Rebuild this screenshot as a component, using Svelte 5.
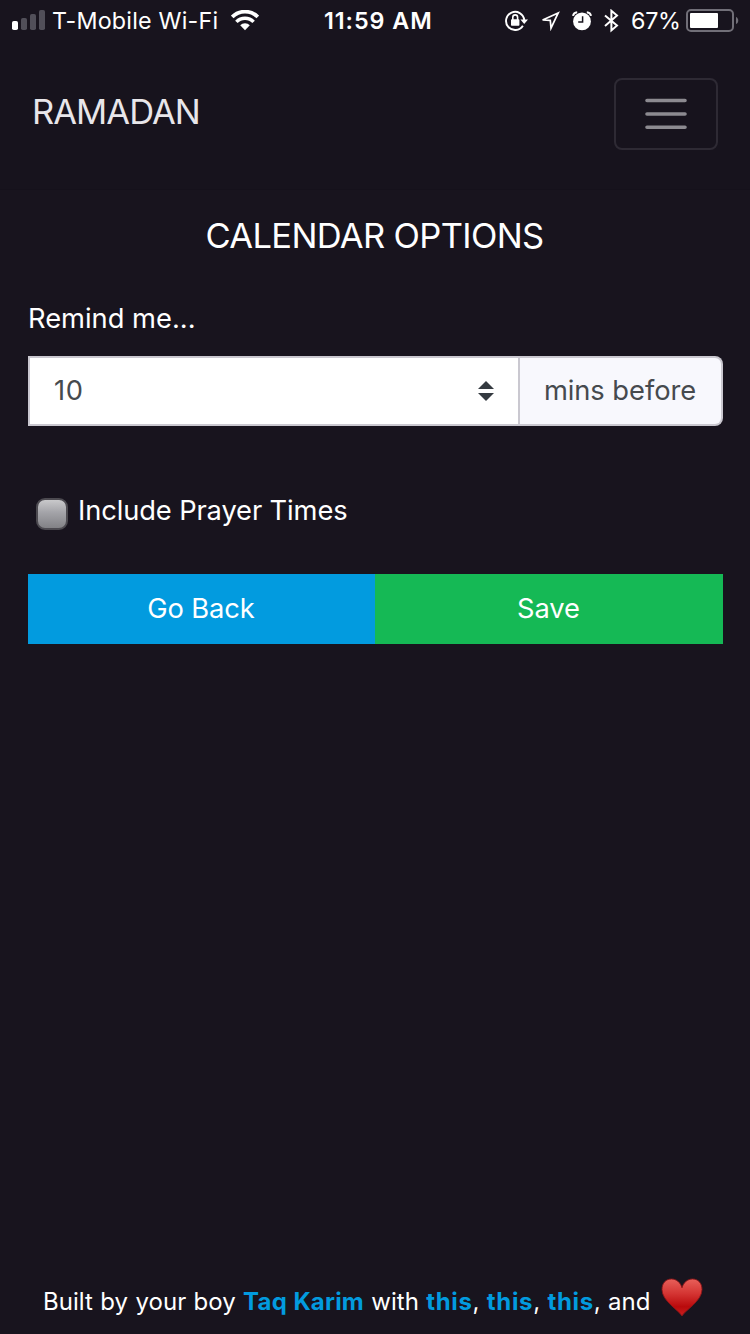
<script>
  const links = ['this', 'this', 'this'];
  let included = $state(false);
</script>

<div class="screen">
  <div class="status">
    <div class="carrier">
      <svg class="signal" width="34" height="20" viewBox="0 0 34 20">
        <rect x="0" y="11" width="6" height="9" rx="1.8" fill="#fff" />
        <rect x="9" y="8" width="6" height="12" rx="1.8" fill="#514f59" />
        <rect x="18" y="4" width="6" height="16" rx="1.8" fill="#514f59" />
        <rect x="27" y="0" width="6" height="20" rx="1.8" fill="#514f59" />
      </svg>
      <span class="network">T-Mobile Wi-Fi</span>
      <svg class="wifi" width="28" height="21" viewBox="0 0 28 21">
        <path d="M1.2 7A18 18 0 0 1 26.8 7" fill="none" stroke="#fff" stroke-width="3.8" />
        <path d="M5.4 11.9A12 12 0 0 1 22.6 11.9" fill="none" stroke="#fff" stroke-width="3.5" />
        <path d="M9.2 15.2A6.7 6.7 0 0 1 18.8 15.2L14 20.2Z" fill="#fff" />
      </svg>
    </div>
    <div class="time">11:59 AM</div>
    <div class="indicators">
      <svg class="lock" width="24" height="22" viewBox="0 0 24 22">
        <path d="M17.9 15.7A9.1 9.1 0 1 1 19.2 10" fill="none" stroke="#fff" stroke-width="1.9" />
        <path d="M15.4 9.4H23L19.2 13.9Z" fill="#fff" />
        <rect x="6" y="9.2" width="8.4" height="6.5" rx="0.8" fill="#fff" />
        <path d="M7.8 10V7.3a2.4 2.4 0 0 1 4.8 0V10" fill="none" stroke="#fff" stroke-width="1.6" />
      </svg>
      <svg class="arrow" width="20" height="20" viewBox="0 0 20 20">
        <path d="M2.6 9L18.2 1.9L11 17.2L10.3 9.3Z" fill="none" stroke="#fff" stroke-width="1.7" />
      </svg>
      <svg class="alarm" width="20" height="20" viewBox="0 0 20 20">
        <circle cx="10" cy="10.4" r="8.9" fill="#fff" />
        <path d="M10.6 5.2V11.1H6.2" fill="none" stroke="#18141e" stroke-width="1.5" />
        <path d="M1 4.9Q1.6 1.5 5.2 1.2M14.8 1.2Q18.4 1.5 19 4.9" fill="none" stroke="#fff" stroke-width="2" />
      </svg>
      <svg class="bluetooth" width="15" height="24" viewBox="0 0 15 24">
        <path d="M1 6.4L13 16.6L7.4 21.4V1.8L13 6.6L1 17" fill="none" stroke="#fff" stroke-width="2" />
      </svg>
      <span class="percent">67%</span>
      <svg class="battery" width="53" height="24" viewBox="0 0 53 24">
        <rect x="1" y="1" width="46" height="21" rx="4" fill="none" stroke="#716f78" stroke-width="2" />
        <rect x="4" y="4" width="28" height="15" rx="1" fill="#fff" />
        <path d="M50 8C53 9 53 14 50 15Z" fill="#716f78" />
      </svg>
    </div>
  </div>

  <nav>
    <span class="brand">RAMADAN</span>
    <button class="toggler" aria-label="Menu">
      <svg width="42" height="32" viewBox="0 0 42 32">
        <path d="M2 2.5H40M2 16H40M2 29.2H40" stroke="#8c8a90" stroke-width="3.6" stroke-linecap="round" />
      </svg>
    </button>
  </nav>

  <main>
    <h1>CALENDAR OPTIONS</h1>
    <div class="remind">Remind me...</div>
    <div class="group">
      <div class="select">
        <span class="value">10</span>
        <svg width="16" height="20" viewBox="0 0 16 20">
          <path d="M0 8L8 0L16 8ZM0 12H16L8 20Z" fill="#343a40" />
        </svg>
      </div>
      <div class="addon"><span>mins before</span></div>
    </div>
    <div class="check">
      <button class="box" role="checkbox" aria-checked={included} aria-label="Include Prayer Times" onclick={() => (included = !included)}></button>
      <span class="label">Include Prayer Times</span>
    </div>
    <div class="actions">
      <button class="back"><span>Go Back</span></button>
      <button class="save"><span>Save</span></button>
    </div>
  </main>

  <footer>
    <span class="credit">Built by your boy <b class="author">Taq Karim</b> with {#each links as link}<b>{link}</b>,{' '}{/each}and</span>
    <svg class="heart" width="42" height="40" viewBox="0 0 42 40">
      <defs>
        <linearGradient id="red" x1="0" y1="0" x2="0" y2="1">
          <stop offset="0" stop-color="#e8605a" />
          <stop offset="0.4" stop-color="#d43432" />
          <stop offset="0.75" stop-color="#b90a0c" />
          <stop offset="1" stop-color="#c82020" />
        </linearGradient>
      </defs>
      <path d="M21 38C17.500 32 1 23 1 11.500C1 5 5 1 10.500 1C15.500 1 19.500 4.500 21 9.800C22.500 4.500 26.500 1 31.500 1C37 1 41 5 41 11.500C41 23 24.500 32 21 38Z" fill="url(#red)" stroke="#8a1519" stroke-width="0.9" />
    </svg>
  </footer>
</div>

<style>
  :global(body) { margin: 0; background: #18141e; }
  .screen {
    width: 750px; height: 1334px; box-sizing: border-box;
    display: flex; flex-direction: column; overflow: hidden;
    background: #18141e; color: #fff;
    font-family: Inter, "Liberation Sans", sans-serif;
    font-size: 27.3px;
  }
  button { font: inherit; color: inherit; border: 0; padding: 0; margin: 0; }
  svg { display: block; flex: none; }
  span { white-space: nowrap; }
  .status {
    height: 40px; display: grid; grid-template-columns: 324px 110px 1fr;
    align-items: center; font-size: 23.3px; line-height: 40px;
  }
  .carrier, .indicators { display: flex; align-items: center; height: 40px; }
  .carrier { padding-left: 12px; }
  .signal { margin-bottom: 1px; }
  .network { width: 168px; margin: 1px 10px 0 6px; letter-spacing: 0.2px; }
  .wifi { margin-left: 1px; }
  .time { font-weight: 600; letter-spacing: 0.95px; margin-top: 1px; white-space: nowrap; }
  .indicators { padding-left: 71px; }
  .arrow { margin-left: 11px; }
  .alarm { margin-left: 12px; }
  .bluetooth { margin-left: 12px; }
  .percent { width: 49px; margin: 1px 6px 0 12px; letter-spacing: -0.3px; }
  nav {
    height: 150px; box-sizing: border-box; padding: 38px 32px 0 32px;
    display: flex; justify-content: space-between; align-items: flex-start;
    border-bottom: 1px solid #15111b; background: #17131d;
  }
  .brand { font-size: 34.5px; line-height: 70px; color: #e8e6ea; letter-spacing: -0.95px; margin-top: -1px; }
  .toggler {
    width: 104px; height: 72px; box-sizing: border-box; display: flex;
    align-items: center; justify-content: center;
    border: 2px solid #2e2a34; border-radius: 8px; background: none;
  }
  main { padding: 0 27px 0 28px; }
  h1 { margin: 20px 0 0; padding-right: 2px; font-size: 34.5px; line-height: 52px; font-weight: 400; text-align: center; letter-spacing: -0.65px; }
  .remind { margin-top: 36px; line-height: 42px; }
  .group { margin-top: 16px; height: 70px; display: flex; color: #464a4e; }
  .group span { padding-bottom: 2px; letter-spacing: -0.05px; }
  .group .value { letter-spacing: 0.6px; }
  .select {
    width: 492px; box-sizing: border-box; border: 2px solid #cac8d0; background: #fff;
    display: flex; align-items: center; justify-content: space-between; padding: 0 24px 0 24px;
  }
  .addon {
    flex: 1; box-sizing: border-box; border: 2px solid #cac8d0; border-left: 0;
    border-radius: 0 8px 8px 0; background: #f8f8fd; display: flex; align-items: center; justify-content: center;
    padding-right: 1px;
  }
  .check { display: flex; align-items: center; margin-top: 64px; height: 42px; padding-left: 8px; gap: 10px; }
  .label { padding-bottom: 2px; letter-spacing: -0.12px; }
  .box {
    width: 32px; height: 32px; box-sizing: border-box; border: 2px solid #4c4a50;
    border-radius: 9px; background: linear-gradient(#c9c9cb, #a3a3a8 45%, #828286); margin-top: 6px;
  }
  .actions { display: grid; grid-template-columns: 347px 1fr; height: 70px; margin-top: 42px; }
  .actions button { padding: 0 1px 2px 0; letter-spacing: -0.1px; }
  .back { background: #029bdf; }
  .save { background: #15b955; }
  footer { margin-top: auto; height: 76px; display: flex; align-items: center; padding-left: 43px; font-size: 24px; }
  .credit { width: 609px; margin-top: 11px; letter-spacing: 0.05px; word-spacing: 0.5px; }
  .credit b { color: #029bdf; font-weight: 700; letter-spacing: 0.65px; }
  .credit .author { letter-spacing: 0.2px; }
  .heart { margin: 3px 0 0 9px; }
</style>
